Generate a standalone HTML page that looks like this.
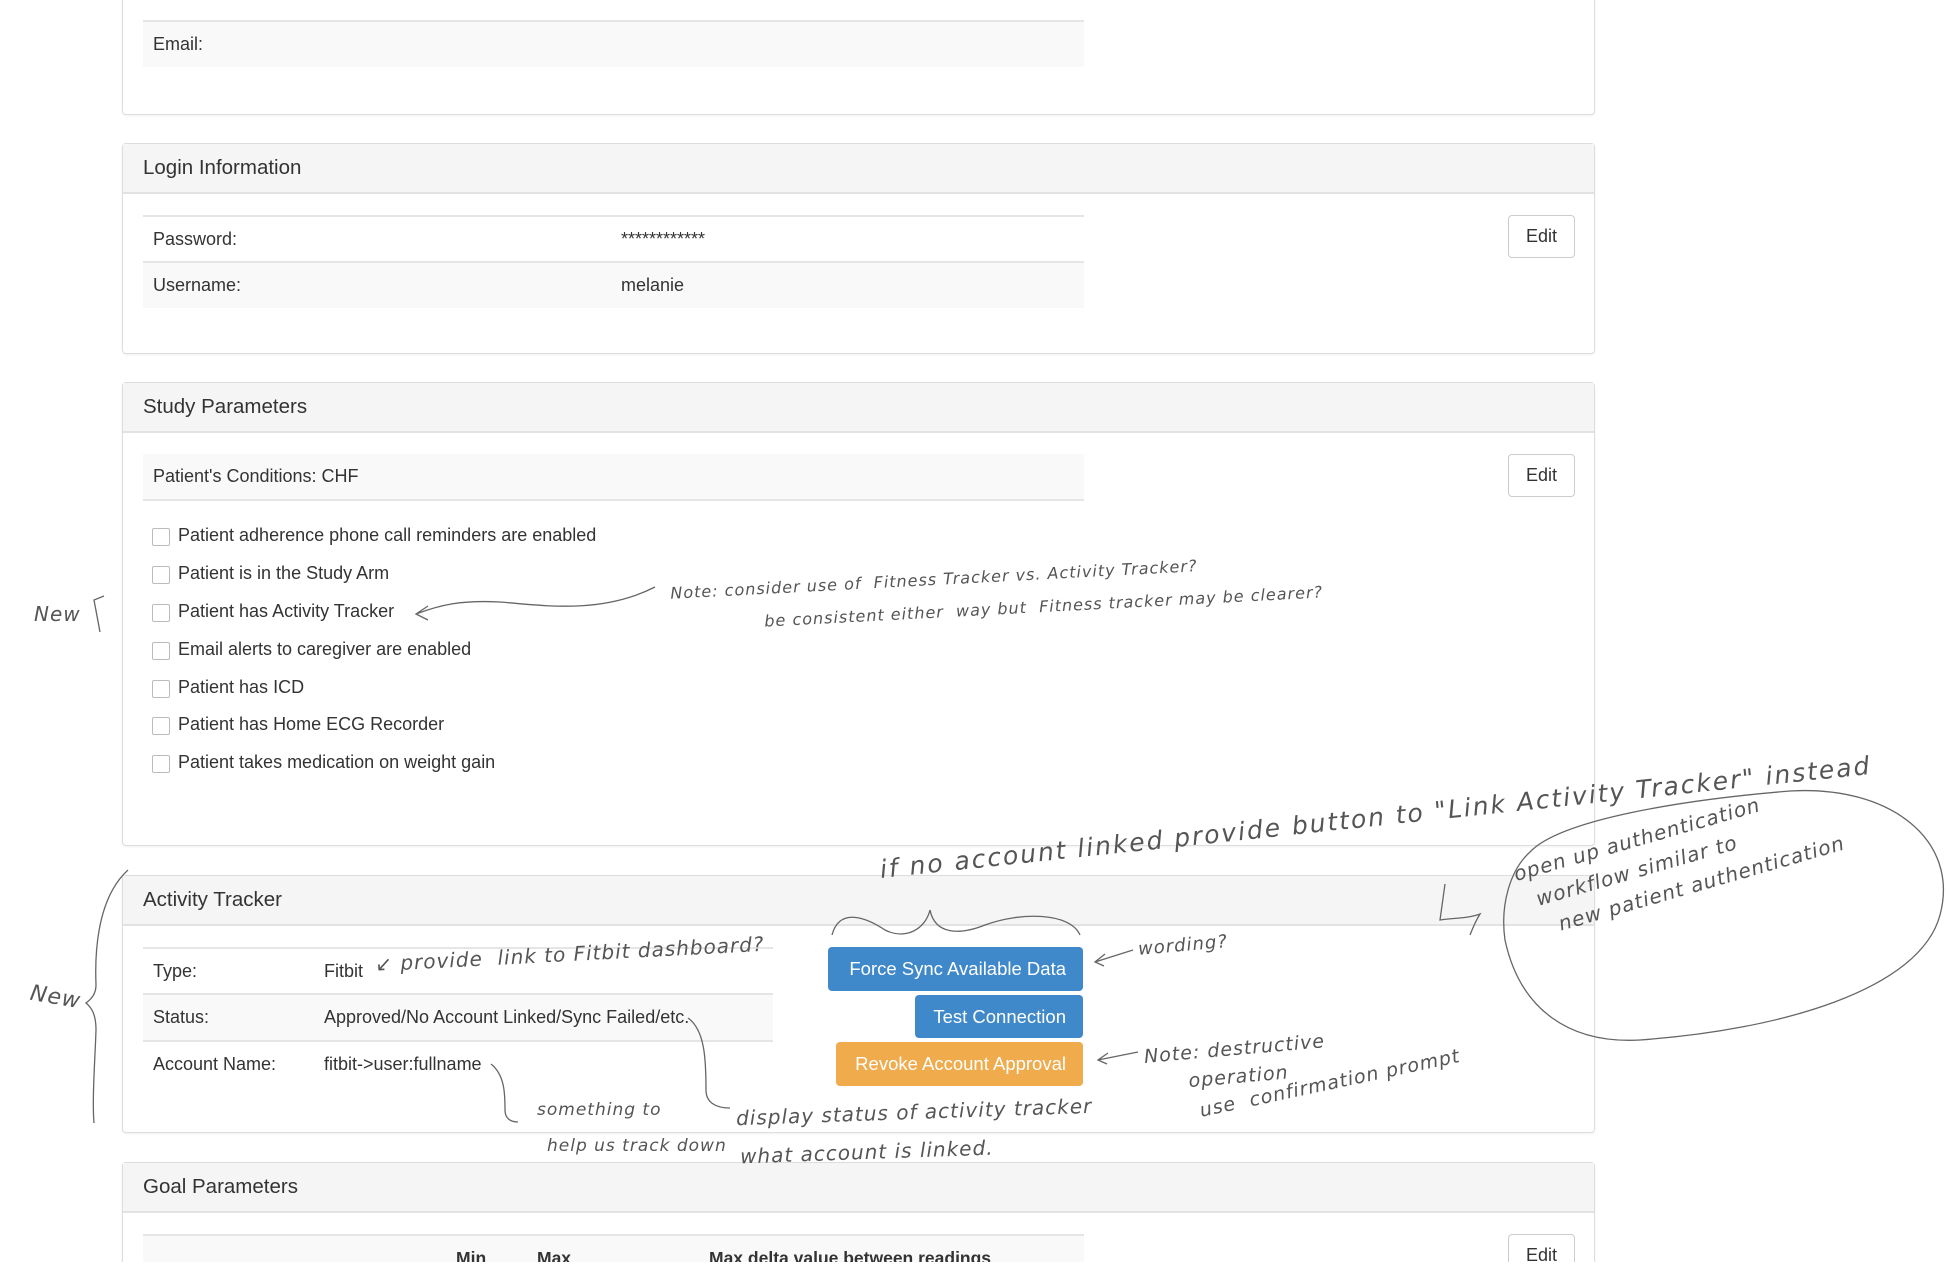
<!DOCTYPE html>
<html><head><meta charset="utf-8"><style>
*{box-sizing:border-box;margin:0;padding:0}
html,body{width:1957px;height:1280px;overflow:hidden}
body{background:#fff;position:relative;font-family:"Liberation Sans",Arial,sans-serif;color:#333;font-size:18px}
.p{position:absolute;left:122px;width:1473px;border:1px solid #ddd;border-radius:4px;background:#fff;box-shadow:0 1px 2px rgba(0,0,0,.06)}
.h{position:absolute;left:0;right:0;top:0;height:50px;background:#f5f5f5;border-bottom:2px solid #e2e2e2;padding-left:20px;line-height:48px;font-size:20.5px;color:#333}
.r{position:absolute;left:20px;width:941px;border-top:2px solid #e5e5e5;line-height:44px;padding-left:10px}
.g{background:#f9f9f9}
.v{position:absolute;left:478px;top:0}
.e{position:absolute;right:19px;width:67px;height:43px;border:1px solid #ccc;border-radius:4px;background:#fff;text-align:center;line-height:40px;font-size:18px;color:#333}
.c{position:absolute;left:152px;font-size:18px}
.c i{position:absolute;left:0;top:3px;width:18px;height:18px;border:1px solid #bbb;border-radius:2px;background:#fff}
.c span{position:absolute;left:26px;top:0;white-space:nowrap}
.b{position:absolute;color:#fff;border-radius:4px;text-align:right;padding-right:17px;font-size:18.5px}
.hw{position:absolute;font-family:"DejaVu Sans",sans-serif;font-weight:200;color:#555;white-space:nowrap;font-style:italic;letter-spacing:1px}
</style></head><body>

<div class="p" style="top:-10px;height:125px;border-top:none">
 <div class="r g" style="top:30px;height:47px">Email:</div>
</div>

<div class="p" style="top:143px;height:211px">
 <div class="h">Login Information</div>
 <div class="r" style="top:71px;height:47px">Password:<span class="v">************</span></div>
 <div class="r g" style="top:117px;height:47px">Username:<span class="v">melanie</span></div>
 <div class="e" style="top:71px">Edit</div>
</div>

<div class="p" style="top:382px;height:464px">
 <div class="h">Study Parameters</div>
 <div class="r g" style="top:71px;height:47px;border-top:none;border-bottom:2px solid #e5e5e5">Patient's Conditions: CHF</div>
 <div class="e" style="top:71px">Edit</div>
</div>
<div class="c" style="top:525px"><i></i><span>Patient adherence phone call reminders are enabled</span></div>
<div class="c" style="top:563px"><i></i><span>Patient is in the Study Arm</span></div>
<div class="c" style="top:601px"><i></i><span>Patient has Activity Tracker</span></div>
<div class="c" style="top:639px"><i></i><span>Email alerts to caregiver are enabled</span></div>
<div class="c" style="top:677px"><i></i><span>Patient has ICD</span></div>
<div class="c" style="top:714px"><i></i><span>Patient has Home ECG Recorder</span></div>
<div class="c" style="top:752px"><i></i><span>Patient takes medication on weight gain</span></div>

<div class="p" style="top:875px;height:258px">
 <div class="h">Activity Tracker</div>
 <div class="r" style="top:71px;height:47px;width:630px">Type:<span class="v" style="left:181px">Fitbit</span></div>
 <div class="r g" style="top:117px;height:47px;width:630px">Status:<span class="v" style="left:181px">Approved/No Account Linked/Sync Failed/etc.</span></div>
 <div class="r" style="top:164px;height:47px;width:630px">Account Name:<span class="v" style="left:181px">fitbit-&gt;user:fullname</span></div>
</div>
<div class="b" style="left:828px;top:947px;width:255px;height:44px;line-height:44px;background:#3f88c9">Force Sync Available Data</div>
<div class="b" style="left:915px;top:995px;width:168px;height:43px;line-height:43px;background:#3f88c9">Test Connection</div>
<div class="b" style="left:836px;top:1042px;width:247px;height:44px;line-height:44px;background:#efab4c">Revoke Account Approval</div>

<div class="p" style="top:1162px;height:140px">
 <div class="h">Goal Parameters</div>
 <div class="r g" style="top:71px;height:60px;font-weight:bold;font-size:17.5px">
  <span style="position:absolute;left:313px">Min</span><span style="position:absolute;left:394px">Max</span><span style="position:absolute;left:566px">Max delta value between readings</span></div>
 <div class="e" style="top:71px">Edit</div>
</div>
<div style="position:absolute;left:0;top:1262px;width:1957px;height:18px;background:#fff"></div>

<svg style="position:absolute;left:0;top:0" width="1957" height="1280" fill="none" stroke="#666" stroke-width="1.3">
 <path d="M104 596 L94 600 L100 632"/>
 <path d="M655 587 C600 615 540 605 500 602 C460 600 440 605 416 614 M428 606 L416 614 L428 620"/>
 <path d="M128 870 C95 900 95 960 96 985 C96 995 90 1000 86 1003 C92 1008 96 1015 96 1030 C95 1060 92 1100 94 1123"/>
 <path d="M832 935 C840 905 870 920 885 930 C905 940 925 930 930 910 C935 935 960 935 985 925 C1020 912 1070 912 1080 935"/>
 <path d="M1133 950 L1095 962 M1105 954 L1095 962 L1104 966"/>
 <path d="M1138 1052 L1098 1060 M1108 1053 L1098 1060 L1107 1064"/>
 <path d="M1445 884 L1440 920 C1455 918 1470 918 1480 914 C1475 922 1472 930 1470 935"/>
 <path d="M1530 852 C1560 820 1680 800 1790 791 C1890 785 1960 840 1940 915 C1920 990 1780 1030 1640 1040 C1570 1044 1520 1010 1505 940 C1500 905 1510 870 1530 852"/>
 <path d="M491 1064 C505 1075 505 1095 505 1110 C505 1118 510 1122 518 1122"/>
 <path d="M688 1018 C705 1030 706 1060 706 1090 C706 1102 715 1108 730 1108"/>
</svg>
<div class="hw" style="left:34px;top:602px;font-size:20px">New</div>
<div class="hw" style="left:30px;top:985px;font-size:22px;transform:rotate(10deg)">New</div>
<div class="hw" style="left:670px;top:570px;font-size:16px;transform:rotate(-3deg)">Note: consider use of &nbsp;Fitness Tracker vs. Activity Tracker?</div>
<div class="hw" style="left:764px;top:597px;font-size:16px;transform:rotate(-3deg)">be consistent either &nbsp;way but &nbsp;Fitness tracker may be clearer?</div>
<div class="hw" style="left:880px;top:855px;font-size:25px;letter-spacing:2px;transform:rotate(-6deg);transform-origin:0 50%">if no account linked provide button to "Link Activity Tracker" instead</div>
<div class="hw" style="left:1510px;top:860px;font-size:20px;line-height:30px;transform:rotate(-16deg);transform-origin:0 0">open up authentication<br>&nbsp;&nbsp;workflow similar to<br>&nbsp;&nbsp;&nbsp;&nbsp;new patient authentication</div>
<div class="hw" style="left:1138px;top:935px;font-size:18px;transform:rotate(-5deg)">wording?</div>
<div class="hw" style="left:1145px;top:1035px;font-size:19px;line-height:28px;transform:rotate(-5deg)">Note: destructive<br>&nbsp;&nbsp;&nbsp;&nbsp;&nbsp;&nbsp;operation</div>
<div class="hw" style="left:1200px;top:1100px;font-size:19px;transform:rotate(-12deg);transform-origin:0 50%">use &nbsp;confirmation prompt</div>
<div class="hw" style="left:375px;top:942px;font-size:20px;transform:rotate(-3deg)">&#8601; provide &nbsp;link to Fitbit dashboard?</div>
<div class="hw" style="left:537px;top:1100px;font-size:17px">something to</div>
<div class="hw" style="left:547px;top:1136px;font-size:17px">help us track down</div>
<div class="hw" style="left:736px;top:1100px;font-size:20px;transform:rotate(-2deg)">display status of activity tracker</div>
<div class="hw" style="left:740px;top:1140px;font-size:20px;transform:rotate(-2deg)">what account is linked.</div>
</body></html>
